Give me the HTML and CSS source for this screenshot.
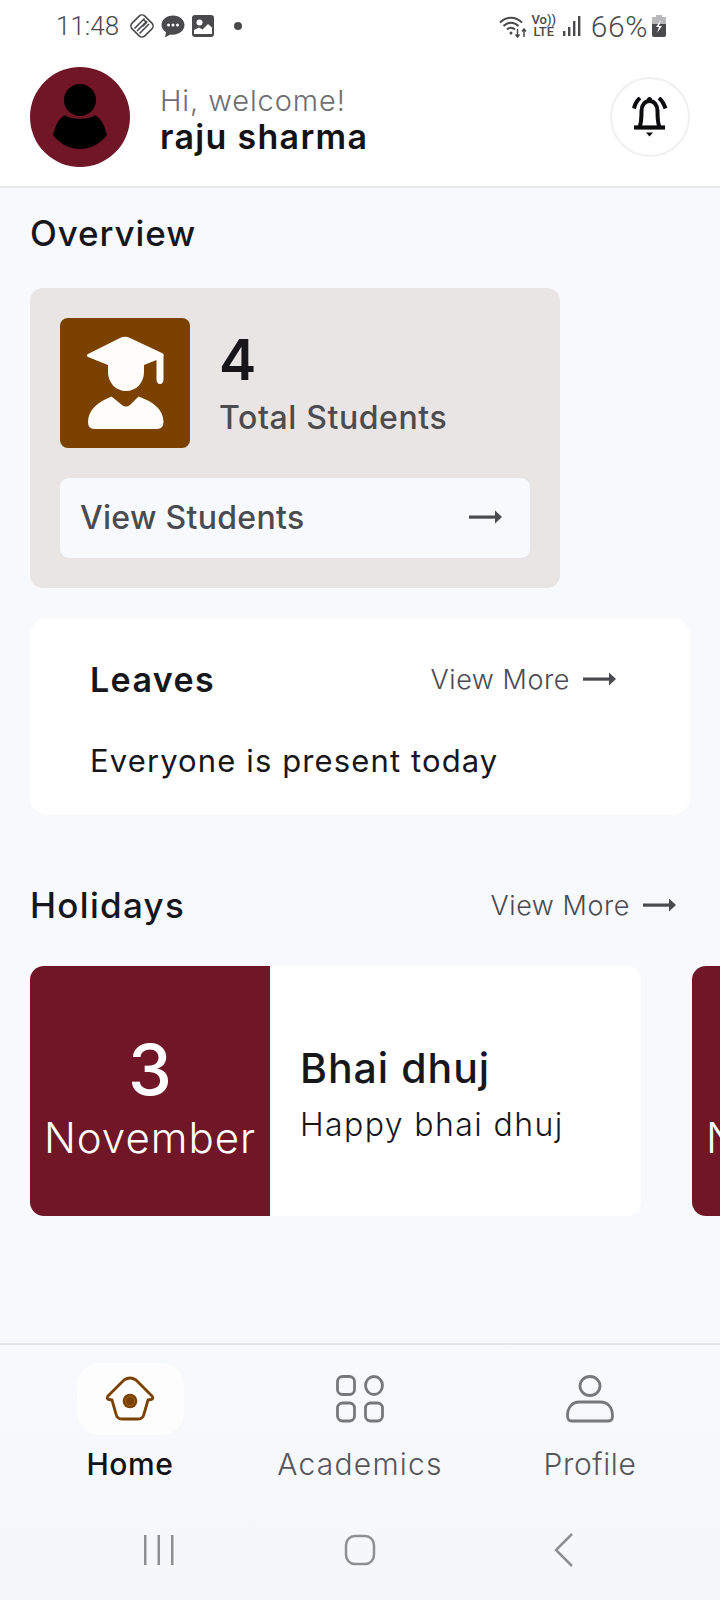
FILE: index.html
```html
<!DOCTYPE html>
<html lang="en">
<head>
<meta charset="utf-8">
<title>Home</title>
<link rel="stylesheet" href="styles.css">
</head>
<body>
<div class="app">
  <header class="top">
    <div class="status">
      <div class="status-side">
        <span class="clock">11:48</span>
        <svg viewBox="0 0 24 24" width="24" height="24" fill="none" stroke="#4a4a4c" stroke-width="1.6"><rect x="3" y="3" width="18" height="18" rx="4" transform="rotate(45 12 12)"/><path d="M4.500 14.500 14.500 4.500M7 17 17 7M9.500 19.500 19 10M12.500 12.500l4-4-3.500-3.500"/></svg>
        <svg viewBox="0 0 24 24" width="24" height="24"><path d="M12 1.500c6.300 0 11.500 4.200 11.500 9.600s-5.200 9.600-11.500 9.600c-1 0-1.900-.1-2.800-.3L4 23.500l1-5.300C2.200 16.400.5 13.900.5 11.100.5 5.700 5.700 1.500 12 1.500z" fill="#4a4a4c"/><circle cx="7.500" cy="11" r="1.500" fill="#fff"/><circle cx="12" cy="11" r="1.500" fill="#fff"/><circle cx="16.500" cy="11" r="1.500" fill="#fff"/></svg>
        <svg viewBox="0 0 22 22" width="22" height="22"><rect width="22" height="22" rx="3" fill="#4a4a4c"/><circle cx="7.500" cy="7.500" r="3" fill="#fff"/><path d="M2 19v-4l5-2.500 3.500 2L16 9l4 3.500V19z" fill="#fff"/></svg>
        <span class="s-dot"></span>
      </div>
      <div class="status-side status-right">
        <svg viewBox="0 0 28 26" width="28" height="26" fill="none" stroke="#4a4a4c" stroke-width="2"><path d="M1 9.500c6.500-6.500 15.500-6.500 22 0M4.500 13c4.500-4.500 10.500-4.500 15 0M8 16.500c2.500-2.500 5.500-2.500 8 0"/><circle cx="12" cy="20" r="1.500" fill="#4a4a4c" stroke="none"/><path d="M18.500 16v8M16.500 21.500l2 2.500 2-2.500M25 24v-8M23 18.500l2-2.500 2 2.500" stroke-width="1.500"/></svg>
        <span class="volte"><span>Vo))</span><span>LTE</span></span>
        <svg class="bars" viewBox="0 0 18 21" width="18" height="21" fill="#4a4a4c"><rect x="0" y="15" width="2.400" height="5"/><rect x="5" y="11" width="2.400" height="9"/><rect x="10" y="5" width="2.400" height="15"/><rect x="15" y="0" width="2.400" height="20"/></svg>
        <span class="pct">66%</span>
        <svg viewBox="0 0 14 22" width="14" height="22"><path d="M4 0h6v2h3a1 1 0 0 1 1 1v8H0V3a1 1 0 0 1 1-1h3z" fill="#b9b9bb"/><path d="M0 9h14v11a2 2 0 0 1-2 2H2a2 2 0 0 1-2-2z" fill="#4a4a4c"/><path d="M9 5 4 12h3l-2 6 5-7H7z" fill="#fff"/></svg>
      </div>
    </div>
    <div class="user-row">
      <svg class="avatar" viewBox="0 0 100 100" width="100" height="100"><circle cx="50" cy="50" r="50" fill="#701627"/><circle cx="50" cy="33" r="16" fill="#000"/><path d="M35 48c5 5 25 5 30 0 7 4 10 12 12 20-7 9-17 14-27 14s-20-5-27-14c2-8 5-16 12-20z" fill="#000"/></svg>
      <div class="user-text">
        <div class="hello">Hi, welcome!</div>
        <div class="name">raju sharma</div>
      </div>
      <div class="bell">
        <svg viewBox="0 0 40 40" width="40" height="40" fill="none" stroke="#0c0c0e" stroke-width="4"><path d="M9.500 30c1.500-3 2-5 2-16 0-6 3.500-10 8-10s8 4 8 10c0 11 .5 13 2 16"/><path d="M4 30.500h31" stroke-width="4.200"/><circle cx="19.500" cy="2.500" r="2.500" fill="#0c0c0e" stroke="none"/><path d="M16 35.500h7l-3.500 4z" fill="#0c0c0e" stroke="none"/><path d="M10 1C7 3.500 5 7 4 11.500M29 1c3 2.500 5 6 6.500 10.500"/></svg>
      </div>
    </div>
  </header>

  <main class="content">
    <h2 class="h-title overview">Overview</h2>

    <section class="stat-card">
      <div class="stat-top">
        <div class="stat-icon">
          <svg viewBox="0 0 130 130" width="130" height="130" fill="#fffdf9"><path d="M60 20q5-2.500 10 0l33 15.500q1.500 1.500.5 2.500v23q0 5-3.500 5t-3.500-5V42l-12.500 5H48L28 39q-2.500-1.500 0-3z"/><path d="M48 44h36v10c0 11-8 19-18 19s-18-8-18-19z"/><path d="M34 111q-6 0-6-7c0-12 10-20 23.500-25.500L62 87q4 3 8 0l8.500-8.500c15.500 5.500 25 13.500 25 25.500q0 7-6.500 7z"/></svg>
        </div>
        <div class="stat-text">
          <div class="stat-num">4</div>
          <div class="stat-label">Total Students</div>
        </div>
      </div>
      <a class="stat-btn">
        <span>View Students</span>
        <svg viewBox="0 0 33 16" width="33" height="16" fill="#4a4b50"><rect y="6.500" width="29" height="3.200"/><path d="M26 1.500 33 8l-7 6.500z"/></svg>
      </a>
    </section>

    <section class="leaves">
      <div class="row-between leaves-head">
        <h3 class="leaves-title">Leaves</h3>
        <a class="more"><span>View More</span><svg viewBox="0 0 33 16" width="33" height="16" fill="#4a4b50"><rect y="6.500" width="29" height="3.200"/><path d="M26 1.500 33 8l-7 6.500z"/></svg></a>
      </div>
      <p class="leaves-msg">Everyone is present today</p>
    </section>

    <div class="row-between holidays-head">
      <h2 class="h-title holidays-title">Holidays</h2>
      <a class="more"><span>View More</span><svg viewBox="0 0 33 16" width="33" height="16" fill="#4a4b50"><rect y="6.500" width="29" height="3.200"/><path d="M26 1.500 33 8l-7 6.500z"/></svg></a>
    </div>

    <div class="holiday-strip">
      <article class="holiday">
        <div class="h-date"><span class="h-day">3</span><span class="h-month">November</span></div>
        <div class="h-body">
          <div class="h-name">Bhai dhuj</div>
          <div class="h-desc">Happy bhai dhuj</div>
        </div>
      </article>
      <article class="holiday">
        <div class="h-date"><span class="h-day">3</span><span class="h-month">November</span></div>
        <div class="h-body">
          <div class="h-name">Bhai dhuj</div>
          <div class="h-desc">Happy bhai dhuj</div>
        </div>
      </article>
    </div>
  </main>

  <footer class="bottom">
    <nav class="tabs">
      <div class="tab tab-active">
        <div class="tab-ic home-pill">
          <svg viewBox="0 0 50 46" width="50" height="46" fill="none" stroke="#7a4100" stroke-width="2.800" stroke-linejoin="round"><path d="M19 4q6-4 12 0l16 16q2 3-1 3.500l-3 .5-4 14q-1 5-6 5H17q-5 0-6-5L7 24l-3-.5q-3-.5-1-3.500z"/><circle cx="25" cy="25" r="7.300" fill="#7a4100" stroke="none"/><circle cx="25" cy="25" r="4.500" stroke="#a0641c" stroke-width="1"/></svg>
        </div>
        <span class="tab-label">Home</span>
      </div>
      <div class="tab">
        <div class="tab-ic">
          <svg viewBox="0 0 48 48" width="48" height="48" fill="none" stroke="#77787d" stroke-width="2.800"><rect x="1.500" y="1.500" width="17" height="18" rx="5"/><ellipse cx="38" cy="10.500" rx="8.500" ry="9"/><rect x="1.500" y="28" width="17" height="18" rx="5"/><rect x="29.500" y="28" width="17" height="18" rx="5"/></svg>
        </div>
        <span class="tab-label">Academics</span>
      </div>
      <div class="tab">
        <div class="tab-ic">
          <svg viewBox="0 0 48 48" width="48" height="48" fill="none" stroke="#77787d" stroke-width="2.800"><ellipse cx="24" cy="11" rx="10" ry="9.500"/><path d="M1.500 41c0-9 5-14 12-14h21c7 0 12 5 12 14 0 3-1.500 5-4 5H5.500c-2.500 0-4-2-4-5z"/></svg>
        </div>
        <span class="tab-label tab-profile">Profile</span>
      </div>
    </nav>
    <div class="sysnav">
      <svg viewBox="0 0 30 32" width="30" height="32" fill="#8e8f92"><rect y="1" width="2.500" height="30"/><rect x="13.500" y="1" width="2.500" height="30"/><rect x="27" y="1" width="2.500" height="30"/></svg>
      <svg class="sys-home" viewBox="0 0 32 32" width="32" height="32" fill="none" stroke="#8e8f92" stroke-width="2.500"><rect x="2" y="2" width="28" height="28" rx="9"/></svg>
      <svg viewBox="0 0 20 34" width="20" height="34" fill="none" stroke="#8e8f92" stroke-width="2.500"><path d="M18 1 2 17l16 16"/></svg>
    </div>
  </footer>
</div>
</body>
</html>
```

FILE: styles.css
```css
* { box-sizing: border-box; }
html, body { margin: 0; padding: 0; }
body { font-family: "Inter", "Liberation Sans", sans-serif; color: #17171b; background: #f8f9fd; }
h2, h3, p { margin: 0; }
.app { width: 720px; height: 1600px; display: flex; flex-direction: column; overflow: hidden; background: #f8f9fd; }

.top { background: #fff; height: 188px; border-bottom: 2px solid #e9eaec; }
.status { height: 52px; display: flex; justify-content: space-between; align-items: center; padding: 0 54px 0 56px; color: #4a4a4c; }
.status-side { display: flex; align-items: center; gap: 7px; }
.status-right { gap: 0; }
.clock { font-family: "Roboto", sans-serif; font-weight: 300; font-size: 26px; margin-right: 4px; }
.s-dot { width: 8px; height: 8px; border-radius: 50%; background: #4a4a4c; margin-left: 13px; }
.volte { display: flex; flex-direction: column; align-items: center; width: 20px; font-family: "Roboto", sans-serif; font-size: 13px; font-weight: 500; line-height: 12px; margin: 0 9px 0 7px; }
.bars { margin-right: 10px; }
.pct { font-family: "Roboto", sans-serif; font-weight: 300; font-size: 30px; letter-spacing: .6px; margin-right: 4px; }

.user-row { display: flex; align-items: center; height: 134px; padding: 0 30px; margin-top: -2px; }
.avatar { flex: none; }
.user-text { margin-left: 30px; flex: 1; padding-top: 4px; }
.hello { font-size: 29px; font-weight: 300; letter-spacing: .9px; line-height: 36px; color: #6e6e72; }
.name { font-size: 34px; font-weight: 600; letter-spacing: 1.300px; line-height: 36px; color: #131316; }
.bell { width: 80px; height: 80px; border: 2px solid #f0f0f1; border-radius: 50%; display: flex; align-items: center; justify-content: center; }

.content { flex: 1; padding: 0 30px; min-height: 0; }
.h-title { font-size: 35px; font-weight: 500; letter-spacing: .9px; line-height: 44px; color: #17171b; }
.overview { margin-top: 23px; }
.holidays-title { letter-spacing: 1.300px; }

.stat-card { width: 530px; height: 300px; margin-top: 33px; padding: 30px; background: #e9e5e5; border-radius: 13px; }
.stat-top { display: flex; align-items: center; height: 130px; }
.stat-icon { width: 130px; height: 130px; background: #7a4100; border-radius: 8px; flex: none; }
.stat-text { margin-left: 29px; padding-top: 1px; }
.stat-num { font-size: 56px; font-weight: 600; line-height: 66px; color: #17171b; }
.stat-label { margin-top: 3px; font-size: 32px; font-weight: 500; letter-spacing: .6px; line-height: 44px; color: #4c4c50; }
.stat-btn { display: flex; align-items: center; justify-content: space-between; height: 80px; margin-top: 30px; padding: 0 28px 2px 20px; background: #f8f9fd; border-radius: 9px; font-size: 32px; font-weight: 500; letter-spacing: .3px; color: #4a4b50; }

.row-between { display: flex; align-items: center; justify-content: space-between; }
.leaves { height: 197px; margin-top: 30px; padding: 39px 74px 0 60px; background: #fff; border-radius: 18px; }
.leaves-head { height: 44px; }
.leaves-title { font-size: 34px; font-weight: 600; letter-spacing: 1.400px; color: #17171b; }
.more { display: flex; align-items: center; gap: 13px; font-size: 27px; font-weight: 300; letter-spacing: .55px; color: #4a4b50; }
.leaves-msg { margin-top: 38px; font-size: 31px; font-weight: 400; letter-spacing: 1.120px; line-height: 44px; color: #17171b; }

.holidays-head { margin-top: 68px; height: 44px; padding-right: 14px; }
.holiday-strip { display: flex; gap: 51px; margin-top: 39px; width: 800px; }
.holiday { display: flex; width: 611px; height: 250px; flex: none; background: #fff; border-radius: 14px; overflow: hidden; }
.h-date { width: 240px; flex: none; padding-top: 16px; background: #701627; color: #fff; display: flex; flex-direction: column; align-items: center; justify-content: center; }
.h-day { font-size: 70px; font-weight: 500; line-height: 72px; }
.h-month { margin-top: 6px; font-size: 42px; font-weight: 300; letter-spacing: 1px; line-height: 52px; }
.h-body { padding: 6px 0 0 30px; display: flex; flex-direction: column; justify-content: center; }
.h-name { font-size: 41px; font-weight: 500; letter-spacing: 1px; line-height: 54px; color: #17171b; }
.h-desc { font-size: 32px; font-weight: 300; letter-spacing: 1.400px; line-height: 44px; color: #17171b; margin-top: 8px; }

.bottom { height: 257px; border-top: 2px solid #e4e4e7; background: linear-gradient(#f8f9fd, #f6f7fa); }
.tabs { display: grid; grid-template-columns: repeat(3, 230px); height: 180px; padding: 18px 15px 0; }
.tab { display: flex; flex-direction: column; align-items: center; }
.tab-ic { height: 72px; display: flex; align-items: center; justify-content: center; }
.home-pill { width: 107px; background: #fdfdfe; border-radius: 22px; }
.tab-label { margin-top: 11px; font-size: 30px; font-weight: 300; letter-spacing: 1.200px; line-height: 36px; color: #55565a; }
.tab-profile { letter-spacing: .6px; }
.tab-active .tab-label { font-weight: 500; letter-spacing: .6px; color: #131316; }
.sysnav { display: flex; align-items: center; height: 50px; padding-left: 144px; }
.sys-home { margin: 0 178px 0 170px; }
```
